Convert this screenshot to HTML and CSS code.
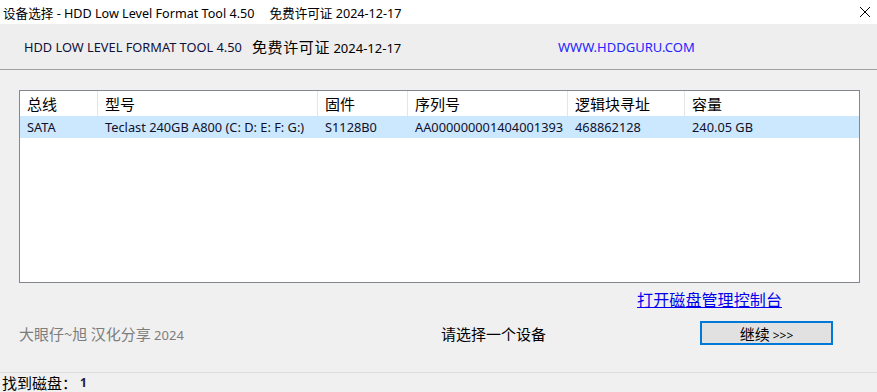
FILE: index.html
```html
<!DOCTYPE html>
<html lang="zh-CN">
<head>
  <meta charset="utf-8" />
  <title>设备选择 - HDD Low Level Format Tool 4.50</title>
  <link rel="stylesheet" href="styles.css">
</head>
<body>
  <div class="window">
    <div class="titlebar">
      <span class="title">设备选择 - HDD Low Level Format Tool 4.50<span class="gap"></span>免费许可证 2024-12-17</span>
      <span class="close">
        <svg width="12" height="12" viewBox="0 0 12 12">
          <path d="M1 1L11 11M11 1L1 11" stroke="#000" stroke-width="1" fill="none"/>
        </svg>
      </span>
    </div>

    <div class="banner">
      <span class="product">HDD LOW LEVEL FORMAT TOOL 4.50</span>
      <span class="license"><span class="cjk">免费许可证</span> 2024-12-17</span>
      <span class="site">WWW.HDDGURU.COM</span>
    </div>

    <main>
      <div class="listview">
        <div class="row head">
          <div class="cell"><span class="cjk">总线</span></div>
          <div class="cell"><span class="cjk">型号</span></div>
          <div class="cell"><span class="cjk">固件</span></div>
          <div class="cell"><span class="cjk">序列号</span></div>
          <div class="cell"><span class="cjk">逻辑块寻址</span></div>
          <div class="cell"><span class="cjk">容量</span></div>
        </div>
        <div class="row item selected">
          <div class="cell">SATA</div>
          <div class="cell">Teclast 240GB A800 (C: D: E: F: G:)</div>
          <div class="cell">S1128B0</div>
          <div class="cell">AA000000001404001393</div>
          <div class="cell">468862128</div>
          <div class="cell">240.05 GB</div>
        </div>
      </div>

      <div class="links">
        <a class="console" href="#">打开磁盘管理控制台</a>
      </div>

      <div class="actions">
        <span class="credit"><span class="cjk">大眼仔~旭 汉化分享</span> 2024</span>
        <span class="prompt">请选择一个设备</span>
        <button class="next"><span class="cjk">继续</span> &gt;&gt;&gt;</button>
      </div>
    </main>

    <footer class="status">
      <span class="cjk">找到磁盘：</span><span class="count">1</span>
    </footer>
  </div>
</body>
</html>
```

FILE: styles.css
```css
* {
  margin: 0;
  padding: 0;
  box-sizing: border-box;
}

body {
  --ui-font: 'Noto Sans', 'Noto Sans CJK SC', sans-serif;
  --cjk-font: 'Noto Sans CJK SC', sans-serif;

  width: 877px;
  height: 392px;
  overflow: hidden;
  background: #f0f0f0;
  font-family: var(--ui-font);
  font-size: 13px;
  color: #000;
}

.cjk {
  font-family: var(--cjk-font);
}

.window {
  display: flex;
  flex-direction: column;
  height: 392px;
}

.titlebar {
  display: flex;
  align-items: center;
  justify-content: space-between;
  height: 24px;
  padding: 0 6px 0 3px;
  background: #fff;

  .title {
    font-size: 12.6px;
    white-space: nowrap;
  }

  .gap {
    display: inline-block;
    width: 15px;
  }

  .close {
    display: flex;
    width: 12px;
    height: 12px;
  }
}

.banner {
  display: flex;
  align-items: center;
  height: 46px;
  padding-left: 24px;
  background: #eeeeee;
  border-bottom: 1px solid #a0a0a0;
  color: #10103a;

  .product {
    width: 228px;
    font-size: 12.8px;
  }

  .license {
    width: 306px;
    color: #000;

    .cjk {
      font-size: 15px;
      letter-spacing: 0.6px;
    }
  }

  .site {
    color: #2424ff;
  }
}

main {
  display: flex;
  flex-direction: column;
  padding: 20px 17px 0 19px;
  height: 302px;
}

.listview {
  height: 193px;
  background: #fff;
  border: 1px solid #828790;
}

.row {
  display: grid;
  grid-template-columns: 78px 220px 90px 160px 117px 1fr;
}

.head {
  height: 25px;
  align-items: center;

  .cell {
    height: 25px;
    display: flex;
    align-items: center;
    padding-left: 7px;
    border-right: 1px solid #e5e5e5;
    font-size: 15px;
  }

  .cell:last-child {
    border-right: none;
  }
}

.item {
  height: 22px;
  align-items: center;

  .cell {
    padding-left: 7px;
    white-space: nowrap;
    font-size: 12.8px;
    color: #10102a;
  }
}

.selected {
  background: #cce8ff;
}

.links {
  display: flex;
  justify-content: flex-end;
  height: 38px;
  padding: 7px 78px 0 0;

  .console {
    font-family: var(--cjk-font);
    font-size: 16px;
    line-height: 18px;
    color: #0000ee;
    letter-spacing: 0.1px;
  }
}

.actions {
  display: flex;
  align-items: center;
  height: 24px;

  .credit {
    width: 422px;
    color: #7d7d7d;
    font-size: 13px;

    .cjk {
      font-size: 15px;
    }
  }

  .prompt {
    width: 259px;
    font-family: var(--cjk-font);
    font-size: 15px;
  }

  .next {
    width: 133px;
    height: 24px;
    border: 2px solid #0078d7;
    background: #e1e1e1;
    font-family: var(--ui-font);
    font-size: 12px;
    color: #000;

    .cjk {
      font-size: 15px;
    }
  }
}

.status {
  display: flex;
  align-items: center;
  height: 20px;
  margin-top: auto;
  padding-left: 2px;
  border-top: 1px solid #dcdcdc;

  .cjk {
    font-size: 15px;
  }

  .count {
    margin-left: 3px;
    font-size: 12px;
    font-weight: bold;
    color: #1a1a40;
  }
}
```
